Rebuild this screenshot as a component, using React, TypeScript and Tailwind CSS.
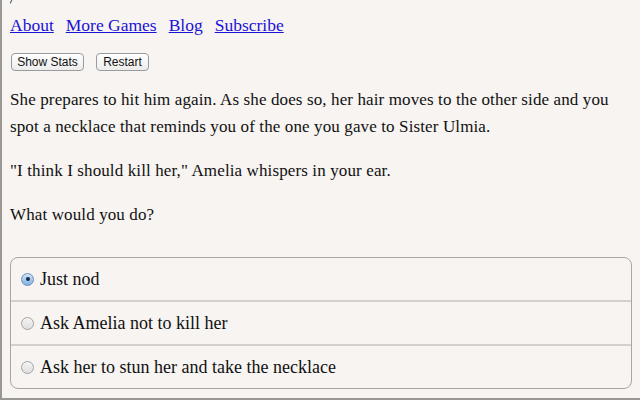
import { useState } from "react";

const choices = [
  "Just nod",
  "Ask Amelia not to kill her",
  "Ask her to stun her and take the necklace",
];

export default function App() {
  const [picked, setPicked] = useState(0);

  return (
    <div className="w-[640px] h-[400px] overflow-hidden bg-[#f7f4f1] border-l-2 border-b-2 border-[#9a9895] font-['Liberation_Serif',serif] text-[#111]">
      <div className="pl-[8px] pr-[10px]">
        {/* cut-off title glyph */}
        <div className="h-[4px] overflow-hidden">
          <div className="-mt-[15px] -ml-[3px] text-[18px] leading-[18px]">y</div>
        </div>

        {/* Nav links */}
        <div className="flex gap-[12px] mt-[11px] text-[17.5px] leading-[20px] text-[#1b12d6]">
          <a href="#" className="underline">About</a>
          <a href="#" className="underline">More Games</a>
          <a href="#" className="underline">Blog</a>
          <a href="#" className="underline">Subscribe</a>
        </div>

        {/* Buttons */}
        <div className="flex gap-[12px] mt-[18px] ml-[1px] font-['Liberation_Sans',sans-serif] text-[12px]">
          <button className="h-[18px] w-[73px] rounded-[4px] border border-[#9b9b9b] bg-gradient-to-b from-white to-[#ececec] leading-none">
            Show Stats
          </button>
          <button className="h-[18px] w-[53px] rounded-[4px] border border-[#9b9b9b] bg-gradient-to-b from-white to-[#ececec] leading-none">
            Restart
          </button>
        </div>

        {/* Story */}
        <div className="mt-[15px] text-[17px] leading-[27px] tracking-[0.12px] space-y-[17px]">
          <p>
            She prepares to hit him again. As she does so, her hair moves to the other side and you spot a
            necklace that reminds you of the one you gave to Sister Ulmia.
          </p>
          <p>"I think I should kill her," Amelia whispers in your ear.</p>
          <p>What would you do?</p>
        </div>

        {/* Choices */}
        <div className="mt-[29px] w-[622px] rounded-[8px] border border-[#a9a6a3] overflow-hidden">
          {choices.map((c, i) => (
            <label
              key={c}
              onClick={() => setPicked(i)}
              className={`flex items-center pl-[10px] gap-[6px] text-[18px] cursor-pointer ${
                i > 0 ? "h-[44px] border-t-2 border-[#d3d0cd]" : "h-[42px]"
              }`}
            >
              {picked === i ? (
                <span className="w-[13px] h-[13px] rounded-full border border-[#6c8fb8] bg-gradient-to-b from-[#cfe3f7] to-[#7fb2e6] flex items-center justify-center">
                  <span className="w-[4px] h-[4px] rounded-full bg-[#1a2a3a]" />
                </span>
              ) : (
                <span className="w-[13px] h-[13px] rounded-full border border-[#a3a3a3] bg-gradient-to-b from-[#f4f4f4] to-[#e0e0e0]" />
              )}
              <span>{c}</span>
            </label>
          ))}
        </div>
      </div>
    </div>
  );
}
